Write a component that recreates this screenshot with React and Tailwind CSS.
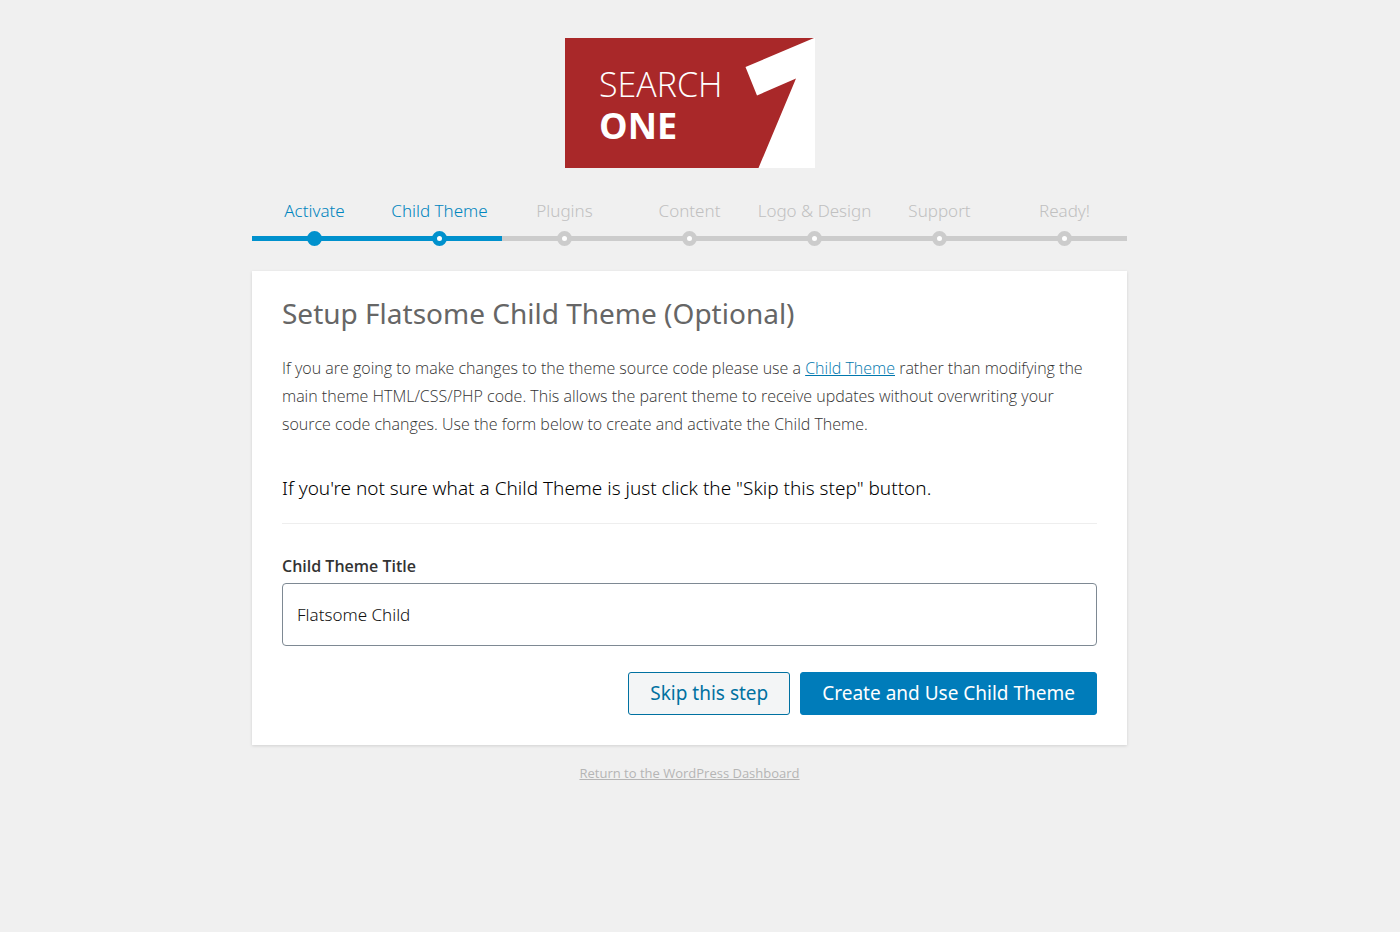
const steps = [
  { label: "Activate", state: "done" },
  { label: "Child Theme", state: "active" },
  { label: "Plugins", state: "todo" },
  { label: "Content", state: "todo" },
  { label: "Logo & Design", state: "todo" },
  { label: "Support", state: "todo" },
  { label: "Ready!", state: "todo" },
];

const stepStyles = {
  done: {
    text: "text-[#0085be]",
    line: "bg-[#0091cd]",
    dot: "border-[#0091cd] bg-[#0091cd]",
  },
  active: {
    text: "text-[#0085be]",
    line: "bg-[#0091cd]",
    dot: "border-[#0091cd] bg-white",
  },
  todo: {
    text: "text-[#c0c0c0]",
    line: "bg-[#cccccc]",
    dot: "border-[#cccccc] bg-white",
  },
};

function Logo() {
  return (
    <svg
      width="250"
      height="130"
      viewBox="0 0 250 130"
      role="img"
      aria-label="Search One"
    >
      <rect width="250" height="130" fill="#a92829" />
      <path d="M249 0 L180.500 29 L192 57.500 L231 40.500 L193.500 130 H250 V0 Z" fill="#fff" />
      <text x="34" y="59" fill="#fff" fontFamily="Open Sans" fontWeight="300" fontSize="34">
        SEARCH
      </text>
      <text x="34" y="101" fill="#fff" fontFamily="Open Sans" fontWeight="700" fontSize="36">
        ONE
      </text>
    </svg>
  );
}

function Steps() {
  return (
    <ol className="mt-8 grid grid-cols-7">
      {steps.map((step) => {
        const style = stepStyles[step.state];

        return (
          <li key={step.label} className="text-center">
            <span className={`block whitespace-nowrap text-[17px] leading-[22px] ${style.text}`}>
              {step.label}
            </span>
            <div className={`mt-[14px] flex h-[5px] items-center justify-center ${style.line}`}>
              <span className={`size-[15px] shrink-0 rounded-full border-5 ${style.dot}`} />
            </div>
          </li>
        );
      })}
    </ol>
  );
}

export default function App() {
  return (
    <div className="min-h-screen bg-[#f0f0f0] pr-[21px] font-['Noto_Sans',sans-serif] font-light">
      <main className="mx-auto max-w-[875px] pt-[38px]">
        <h1 className="flex justify-center">
          <a href="#">
            <Logo />
          </a>
        </h1>

        <Steps />

        <section className="mt-[30px] bg-white px-[30px] pt-6 pb-[30px] shadow-[0_1px_3px_rgba(0,0,0,0.13)]">
          <h2 className="text-[28px] leading-9 font-normal text-[#666666]">
            Setup Flatsome Child Theme (Optional)
          </h2>

          <form onSubmit={(event) => event.preventDefault()}>
            <p className="mt-[23px] font-['Open_Sans',sans-serif] text-[16px] leading-7 text-[#333333]">
              If you are going to make changes to the theme source code please use a{" "}
              <a href="#" className="text-[#0078ae] underline">
                Child Theme
              </a>{" "}
              rather than modifying the main theme HTML/CSS/PHP code. This allows the
              parent theme to receive updates without overwriting your source code
              changes. Use the form below to create and activate the Child Theme.
            </p>

            <p className="mt-9 border-b border-[#eeeeee] pb-[21px] text-[19px] leading-7 text-black">
              If you're not sure what a Child Theme is just click the "Skip this step"
              button.
            </p>

            <label
              htmlFor="theme_name"
              className="mt-8 block font-['Open_Sans',sans-serif] text-[16px] leading-5 font-semibold text-[#333333]"
            >
              Child Theme Title
            </label>
            <input
              id="theme_name"
              type="text"
              defaultValue="Flatsome Child"
              className="mt-[7px] block h-[63px] w-full rounded border border-[#7e8993] bg-white px-[14px] text-[17px] text-[#111111] outline-none"
            />

            <div className="mt-[26px] flex justify-end gap-[10px]">
              <button
                type="button"
                className="h-[43px] rounded-[3px] border border-[#0071a1] bg-[#f3f5f6] px-[21px] text-[19px] font-normal whitespace-nowrap text-[#0071a1]"
              >
                Skip this step
              </button>
              <button
                type="submit"
                className="h-[43px] rounded-[3px] border border-[#007cba] bg-[#007cba] px-[21px] text-[19px] font-normal whitespace-nowrap text-white"
              >
                Create and Use Child Theme
              </button>
            </div>
          </form>
        </section>

        <a
          href="#"
          className="mx-auto mt-[18px] block w-fit font-['Open_Sans',sans-serif] text-[13px] leading-5 font-normal text-[#b5b5b5] underline"
        >
          Return to the WordPress Dashboard
        </a>
      </main>
    </div>
  );
}
